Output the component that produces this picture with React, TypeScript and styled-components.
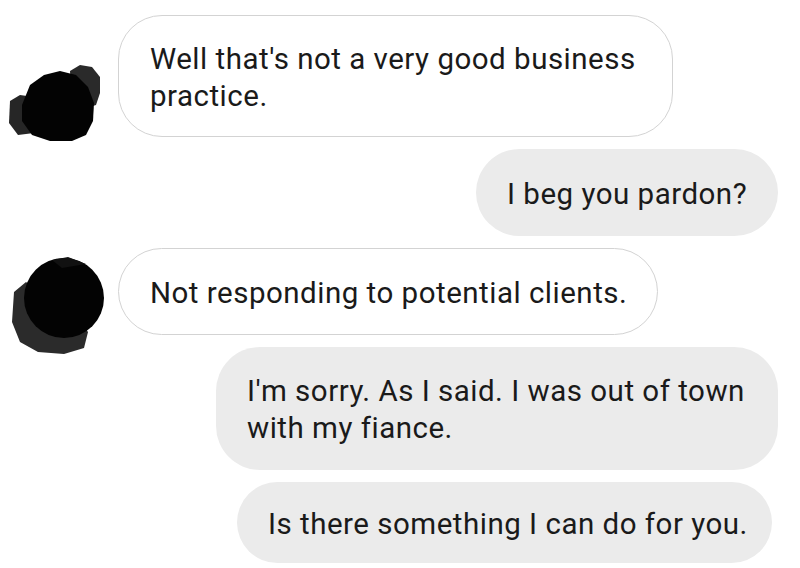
import React from "react";
import styled, { createGlobalStyle } from "styled-components";

const Global = createGlobalStyle`
  html, body { margin: 0; padding: 0; background: #ffffff; }
  body { font-family: Roboto, "Noto Sans", "Liberation Sans", sans-serif; }
`;

const Thread = styled.div`
  width: 800px;
  height: 568px;
  overflow: hidden;
  box-sizing: border-box;
  padding: 15px 22px 0 0;
  display: flex;
  flex-direction: column;
  gap: 12px;
  background: #ffffff;
`;

const Row = styled.div<{ $mine?: boolean; $h: number }>`
  display: flex;
  align-items: flex-start;
  justify-content: ${(p) => (p.$mine ? "flex-end" : "flex-start")};
  height: ${(p) => p.$h}px;
  flex-shrink: 0;
`;

const AvatarSlot = styled.div`
  width: 118px;
  flex-shrink: 0;
  position: relative;
  align-self: stretch;
`;

const AvatarArt = styled.svg`
  position: absolute;
  left: 0;
  top: 0;
  overflow: visible;
`;

const Bubble = styled.div<{ $mine?: boolean; $w: number; $inset?: number }>`
  box-sizing: border-box;
  width: ${(p) => p.$w}px;
  height: 100%;
  margin-right: ${(p) => p.$inset ?? 0}px;
  padding: 3px 20px 0 31px;
  display: flex;
  flex-direction: column;
  justify-content: center;
  border-radius: 44px;
  background: ${(p) => (p.$mine ? "#ebebeb" : "#ffffff")};
  border: ${(p) => (p.$mine ? "none" : "1.5px solid #d3d3d3")};
  color: #1a1a1a;
  font-size: 29.5px;
  line-height: 37px;
  letter-spacing: 0.5px;
  white-space: nowrap;
`;

const Line = styled.span`
  display: block;
`;

function ScribbleOne() {
  return (
    <AvatarArt width="118" height="122" viewBox="0 0 118 122">
      <path
        d="M70 56 L80 50 L92 52 L100 62 L100 78 L96 90 L84 94 L72 86 Z"
        fill="#2a2a2a"
      />
      <path
        d="M10 86 L20 80 L34 82 L40 100 L34 118 L18 120 L9 108 Z"
        fill="#262626"
      />
      <path
        d="M22 90 L30 70 L44 60 L60 56 L76 60 L88 72 L94 88 L93 106 L86 120 L72 126 L50 126 L32 120 L22 106 Z"
        fill="#030303"
      />
    </AvatarArt>
  );
}

function ScribbleTwo() {
  return (
    <AvatarArt width="118" height="87" viewBox="0 0 118 87">
      <path
        d="M14 44 L26 34 L44 48 L74 66 L88 84 L84 100 L64 106 L38 104 L20 94 L12 74 Z"
        fill="#2b2b2b"
      />
      <circle cx="64" cy="50" r="40" fill="#030303" />
      <path d="M52 12 L68 9 L86 16 L62 20 Z" fill="#111" />
    </AvatarArt>
  );
}

export default function App() {
  return (
    <>
      <Global />
      <Thread>
        <Row $h={122}>
          <AvatarSlot>
            <ScribbleOne />
          </AvatarSlot>
          <Bubble $w={555}>
            <Line>Well that's not a very good business</Line>
            <Line>practice.</Line>
          </Bubble>
        </Row>
        <Row $mine $h={87}>
          <Bubble $mine $w={302}>
            <Line>I beg you pardon?</Line>
          </Bubble>
        </Row>
        <Row $h={87}>
          <AvatarSlot>
            <ScribbleTwo />
          </AvatarSlot>
          <Bubble $w={540}>
            <Line>Not responding to potential clients.</Line>
          </Bubble>
        </Row>
        <Row $mine $h={123}>
          <Bubble $mine $w={562}>
            <Line>I'm sorry. As I said. I was out of town</Line>
            <Line>with my fiance.</Line>
          </Bubble>
        </Row>
        <Row $mine $h={81}>
          <Bubble $mine $w={535} $inset={6}>
            <Line>Is there something I can do for you.</Line>
          </Bubble>
        </Row>
      </Thread>
    </>
  );
}
